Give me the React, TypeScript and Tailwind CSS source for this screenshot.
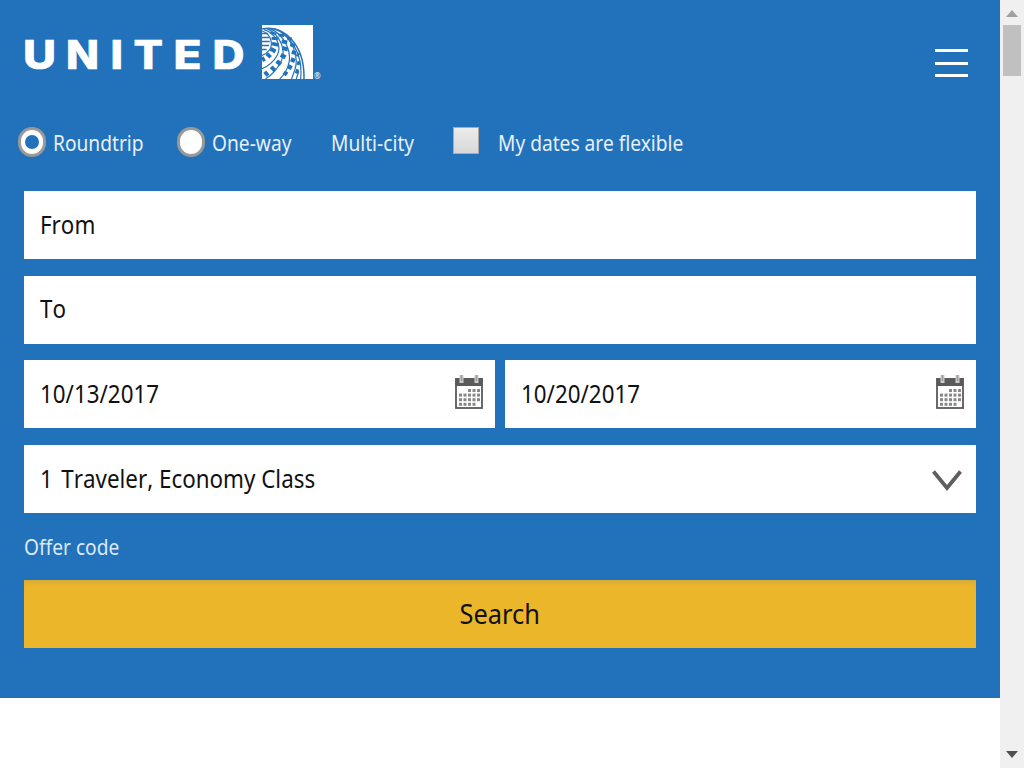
import type { ReactNode } from "react";

const LETTERS: [string, number, number][] = [
  ["U", 1, 29],
  ["N", 44, 29],
  ["I", 88.5, 8.5],
  ["T", 111.5, 25.5],
  ["E", 151.5, 24],
  ["D", 190.5, 28],
];

// x, y, rotation, width, height of each tile between the globe's meridians
const TILES: [number, number, number, number, number][] = [
  [34, 25, 5, 18, 7],
  [38, 41, 5, 19, 9],
  [39, 58, 15, 19, 11],
  [33, 76, 30, 17, 12],
  [20, 92, 42, 16, 11],
  [4, 103, 60, 14, 9],
  [58, 31, 5, 17, 9],
  [67, 51, 10, 17, 11],
  [69, 72, 18, 17, 12],
  [63, 94, 28, 16, 13],
  [50, 114, 38, 16, 13],
  [33, 132, 44, 16, 12],
  [13, 147, 50, 15, 11],
  [82, 41, 10, 13, 9],
  [91, 61, 15, 14, 11],
  [95, 83, 20, 13, 12],
  [92, 106, 22, 13, 13],
  [83, 127, 28, 13, 13],
  [70, 146, 35, 12, 13],
  [107, 90, 18, 9, 11],
  [109, 115, 18, 9, 12],
  [104, 140, 20, 9, 13],
];

function Globe() {
  return (
    <svg className="h-[54px] w-[51px]" viewBox="0 0 152 163" preserveAspectRatio="none" aria-hidden="true">
      <rect width="152" height="163" fill="#fff" />
      <g fill="none" stroke="#2272bb">
        <g strokeWidth="3.5">
          <path d="M0 12C64 -2 128 58 125 163" strokeWidth="4.5" />
          <path d="M34 11C82 24 124 88 115 163" />
          <path d="M46 14C88 38 112 92 98 135L88 163" />
          <path d="M24 11C65 29 94 80 77 126Q69 148 53 163" />
          <path d="M15 11C55 30 73 77 57 110Q39 145 10 163" />
          <path d="M6 14C39 24 61 62 45 92Q31 118 0 132" />
          <path d="M0 18C30 27 34 64 20 78Q12 88 0 92" />
          <path d="M102 163L110 139" />
        </g>
        <path d="M0 26H17M0 38H21M0 50H23M0 62H21M0 74H14" strokeWidth="4.5" />
      </g>
      <g fill="#2272bb">
        {TILES.map(([x, y, r, w, h]) => (
          <rect key={`${x}-${y}`} x={x - w / 2} y={y - h / 2} width={w} height={h} transform={`rotate(${r} ${x} ${y})`} />
        ))}
      </g>
    </svg>
  );
}

function Logo() {
  return (
    <div className="flex h-[56px] items-start" aria-label="United">
      <svg className="mt-[14px] h-[34px] w-[238px] overflow-visible" viewBox="0 0 238 34">
        {LETTERS.map(([c, x, w]) => (
          <text
            key={c}
            x={x - 2}
            y="29.5"
            textLength={w + 4}
            lengthAdjust="spacingAndGlyphs"
            fill="#fff"
            stroke="#fff"
            strokeWidth="0.6"
            className="font-['Inter',sans-serif] text-[39px] font-extrabold"
          >
            {c}
          </text>
        ))}
      </svg>
      <Globe />
      <span className="mt-[46px] ml-[1px] text-[8px] leading-[10px] text-white">®</span>
    </div>
  );
}

function Calendar() {
  const dots: [number, number][] = [];
  for (let row = 0; row < 4; row++)
    for (let col = 0; col < 5; col++)
      if (!(row === 0 && col < 2) && !(row === 3 && col === 4)) dots.push([4 + col * 4.5, 14 + row * 4.6]);
  return (
    <svg className="h-[35px] w-[28px]" viewBox="0 0 28 35" aria-hidden="true">
      <rect x="1" y="4" width="26" height="29" fill="#fff" stroke="#5a5a5a" strokeWidth="1.8" />
      <path d="M.5 3h27v8H.5z" fill="#5a5a5a" />
      {[6.5, 21.5].map((x) => (
        <g key={x}>
          <path d={`M${x} 0v8`} stroke="#ccc" strokeWidth="4" />
          <path d={`M${x} 0v6`} stroke="#999" strokeWidth="1.5" />
        </g>
      ))}
      {dots.map(([x, y]) => (
        <rect key={`${x}-${y}`} x={x} y={y} width="3" height="3" fill="#888" />
      ))}
    </svg>
  );
}

function Field({ children, icon }: { children: ReactNode; icon?: ReactNode }) {
  return (
    <div className="flex h-[68px] flex-1 items-center justify-between bg-white pl-4 text-[25px] text-[#111]">
      <span className="mb-[1px] origin-left scale-x-[0.895] whitespace-nowrap [font-kerning:none]">{children}</span>
      {icon}
    </div>
  );
}

function Radio({ checked = false }: { checked?: boolean }) {
  return (
    <span className="flex h-[30px] w-[28px] shrink-0 items-center justify-center rounded-full border-[3px] border-[#999] bg-white">
      {checked && <span className="h-[14px] w-[14px] rounded-full bg-[#2272bb]" />}
    </span>
  );
}

function Option({ children, width }: { children: string; width: string }) {
  return (
    <span className={`${width} shrink-0`}>
      <span className="inline-block origin-left scale-x-[0.913] whitespace-nowrap">{children}</span>
    </span>
  );
}

export default function App() {
  return (
    <div className="flex h-[768px] w-[1024px] overflow-hidden bg-white font-['Noto_Sans',sans-serif]">
      <main className="w-[1000px]">
        <div className="h-[698px] bg-[#2272bb] px-6 pt-[25px]">
          <header className="flex h-[102px] justify-between">
            <Logo />
            <button className="mt-[24px] mr-[8px] flex h-[28px] w-[33px] flex-col justify-between" aria-label="Menu">
              <span className="h-[3px] w-full bg-white" />
              <span className="h-[3px] w-full bg-white" />
              <span className="h-[3px] w-full bg-white" />
            </button>
          </header>
          <div className="-ml-[6px] flex h-[30px] items-center text-[21px] leading-[34px] text-[#e6f0fa]">
            <Radio checked />
            <span className="w-[7px]" />
            <Option width="w-[124px] pt-[2px]">Roundtrip</Option>
            <Radio />
            <span className="w-[7px]" />
            <Option width="w-[119px] pt-[2px]">One-way</Option>
            <Option width="w-[122px] pt-[2px]">Multi-city</Option>
            <span className="mb-[4px] h-[27px] w-[26px] border border-[#b0a8a0] bg-linear-to-b from-[#ececec] to-[#d8d8d8]" />
            <span className="w-[19px]" />
            <Option width="w-[190px] pt-[2px]">My dates are flexible</Option>
          </div>
          <div className="mt-[34px] flex flex-col gap-[16.7px]">
            <div className="flex"><Field>From</Field></div>
            <div className="flex"><Field>To</Field></div>
            <div className="flex gap-[10px]">
              <Field icon={<span className="mr-[12px] mb-[3px]"><Calendar /></span>}>10/13/2017</Field>
              <Field icon={<span className="mr-[12px] mb-[3px]"><Calendar /></span>}>10/20/2017</Field>
            </div>
            <div className="flex">
              <Field
                icon={
                  <svg className="mt-[3px] mr-[14px] h-[22px] w-[30px]" viewBox="0 0 30 22" fill="none" stroke="#5e5e5e" strokeWidth="3.8">
                    <path d="M1.5 1.5 15 18 28.5 1.5" />
                  </svg>
                }
              >
                <span className="mr-[3px]">1</span> Traveler, Economy Class
              </Field>
            </div>
          </div>
          <div className="mt-[20px] flex h-[28px] text-[21px] leading-[28px] text-[#dbe9f7]">
            <Option width="w-[95px]">Offer code</Option>
          </div>
          <button className="mt-[19px] flex h-[68px] w-full items-center justify-center bg-[#ecb62b] text-[27px] text-[#111] shadow-[inset_0_4px_4px_-2px_#cfa83e]">
            <span className="scale-x-[0.94]">Search</span>
          </button>
        </div>
      </main>
      <aside className="flex w-6 flex-col items-center bg-[#f0f0f0]">
        <svg className="mt-[10px] h-[7px] w-[12px]" viewBox="0 0 12 7"><path d="M6 0 12 7H0z" fill="#a0a0a0" /></svg>
        <div className="mt-[8px] h-[51px] w-[18px] bg-[#c0c0c0]" />
        <svg className="mt-auto mb-[10px] h-[7px] w-[12px]" viewBox="0 0 12 7"><path d="M0 0H12L6 7z" fill="#505050" /></svg>
      </aside>
    </div>
  );
}
